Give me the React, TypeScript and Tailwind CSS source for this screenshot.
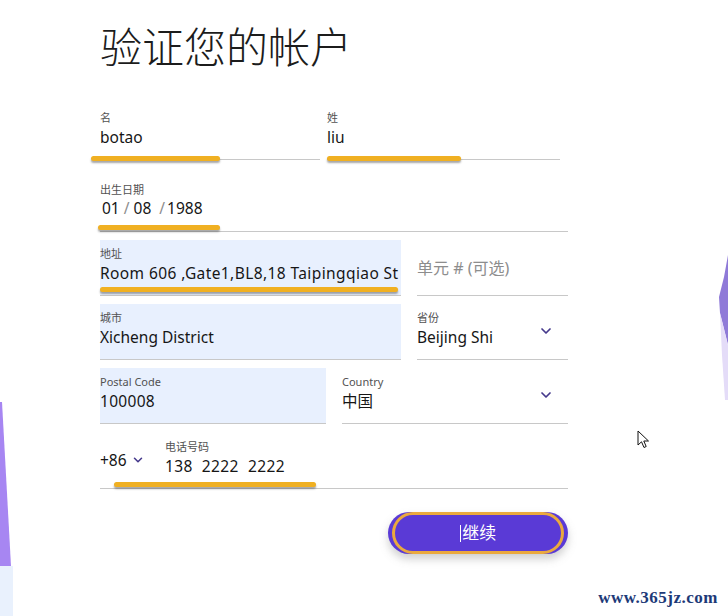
import React from 'react';
import { ChevronDown } from 'lucide-react';

const font = { fontFamily: '"Noto Sans", "Noto Sans CJK SC", sans-serif' };

function Marker({ className }: { className: string }) {
  return (
    <span
      className={`absolute h-[5px] rounded-full bg-[#f0b022] shadow-[0_2px_2px_rgba(60,60,60,0.45)] ${className}`}
    />
  );
}

type FieldProps = {
  label?: string;
  value?: string;
  placeholder?: string;
  filled?: boolean;
  select?: boolean;
  className?: string;
  valueClass?: string;
  children?: React.ReactNode;
};

function Field({ label, value, placeholder, filled, select, className = '', valueClass = '', children }: FieldProps) {
  return (
    <div
      className={`relative h-[56px] border-b border-[#c8c8c8] ${filled ? 'bg-[#e8f0fe]' : ''} ${className}`}
    >
      {placeholder ? (
        <div className="pt-[17px] text-[16px] leading-[22px] text-[#8d8d8d]">{placeholder}</div>
      ) : (
        <div className="pt-[7px]">
          <div className="h-[14px] text-[11px] leading-[14px] text-[#525252]">{label}</div>
          <div className={`mt-[1px] h-[22px] whitespace-nowrap text-[15.5px] leading-[22px] text-[#161616] ${valueClass}`}>
            {value}
          </div>
        </div>
      )}
      {select && (
        <ChevronDown
          className="absolute right-[14px] top-[19px] text-[#45398c]"
          size={16}
          strokeWidth={2.6}
        />
      )}
      {children}
    </div>
  );
}

function Cursor() {
  return (
    <svg className="absolute left-[637px] top-[430px]" width="14" height="20" viewBox="0 0 14 20">
      <path
        d="M1 1 L1 15 L4.5 11.8 L7 17.5 L9.2 16.5 L6.8 11 L11.5 11 Z"
        fill="#fff"
        stroke="#111"
        strokeWidth="1"
        strokeLinejoin="round"
      />
    </svg>
  );
}

export default function App() {
  return (
    <div className="relative h-[616px] w-[728px] overflow-hidden bg-white" style={font}>
      {/* decorative edges */}
      <svg className="absolute left-0 top-[402px]" width="14" height="214" viewBox="0 0 14 214">
        <polygon points="0,0 2,0 11,164 0,164" fill="#a786f2" />
        <rect x="0" y="164" width="13" height="50" fill="#e9f1fd" />
      </svg>
      <svg className="absolute right-0 top-[255px]" width="12" height="150" viewBox="0 0 12 150">
        <polygon points="12,0 8,22 3,42 4,58 12,90" fill="#8f7ad8" />
        <polygon points="4,58 12,90 12,145 9,145 6,100" fill="#e4dcf8" />
      </svg>

      <div className="pl-[100px] pt-[20px]">
        <h1
          className="text-[42px] font-light leading-[50px] text-[#1c1c1c]"
          style={{ fontFamily: '"Noto Sans CJK SC", sans-serif' }}
        >
          验证您的帐户
        </h1>

        <div className="mt-[34px] flex w-[468px] flex-col">
          <div className="flex">
            <Field label="名" value="botao" className="w-[220px]">
              <Marker className="-left-[9px] bottom-[-2px] w-[129px]" />
            </Field>
            <Field label="姓" value="liu" className="ml-[7px] w-[233px]">
              <Marker className="left-0 bottom-[-2px] w-[134px]" />
            </Field>
          </div>

          <div className="mt-[16px]">
            <Field label="出生日期" value="" className="w-[468px]">
              <div className="absolute left-[2px] top-[22px] flex h-[22px] items-center text-[15.5px] text-[#161616]">
                <span>01</span>
                <span className="mx-[4px] text-[#8d8d8d]">/</span>
                <span>08</span>
                <span className="ml-[8px] mr-[2px] text-[#8d8d8d]">/</span>
                <span>1988</span>
              </div>
              <Marker className="-left-[2px] bottom-[1px] w-[122px]" />
            </Field>
          </div>

          <div className="mt-[8px] flex gap-[16px]">
            <Field
              label="地址"
              value="Room 606 ,Gate1,BL8,18 Taipingqiao St"
              filled
              valueClass="tracking-[0.4px]"
              className="w-[301px]"
            >
              <Marker className="left-0 bottom-[3px] w-[298px]" />
            </Field>
            <Field placeholder="单元 # (可选)" className="w-[151px]" />
          </div>

          <div className="mt-[8px] flex gap-[16px]">
            <Field label="城市" value="Xicheng District" filled className="w-[301px]" />
            <Field label="省份" value="Beijing Shi" select className="w-[151px]" />
          </div>

          <div className="mt-[8px] flex gap-[16px]">
            <Field label="Postal Code" value="100008" filled valueClass="tracking-[0.3px]" className="w-[226px]" />
            <Field label="Country" value="中国" select className="w-[226px]" />
          </div>

          <div className="relative mt-[9px] flex h-[56px] w-[468px] border-b border-[#c8c8c8]">
            <div className="flex w-[65px] items-start pt-[16px] text-[15.5px] leading-[22px] text-[#161616]">
              +86
              <ChevronDown className="ml-[4px] mt-[4px] text-[#45398c]" size={14} strokeWidth={2.6} />
            </div>
            <div className="pt-[7px]">
              <div className="h-[14px] text-[11px] leading-[14px] text-[#525252]">电话号码</div>
              <div className="mt-[1px] flex h-[22px] gap-[9px] text-[15.5px] leading-[22px] tracking-[0.4px] text-[#161616]">
                <span>138</span>
                <span>2222</span>
                <span>2222</span>
              </div>
            </div>
            <Marker className="left-[14px] bottom-[1px] w-[202px]" />
          </div>

          <div className="mt-[23px] flex justify-end">
            <button className="flex h-[42px] w-[180px] items-center justify-center rounded-full bg-[#5a3ad6] px-[4px] shadow-[0_5px_8px_rgba(120,120,120,0.35)]">
              <span className="flex h-full w-full items-center justify-center rounded-full border-[3px] border-[#eaa93e] text-[17px] text-white">
                <span className="mr-[1px] inline-block h-[17px] w-[1.5px] bg-white" />
                继续
              </span>
            </button>
          </div>
        </div>
      </div>

      <Cursor />

      <div
        className="absolute bottom-[6px] right-[10px] text-[17px] font-bold tracking-[0.5px] text-[#1d3a78]"
        style={{ fontFamily: '"Liberation Serif", serif' }}
      >
        www.365jz.com
      </div>
    </div>
  );
}
